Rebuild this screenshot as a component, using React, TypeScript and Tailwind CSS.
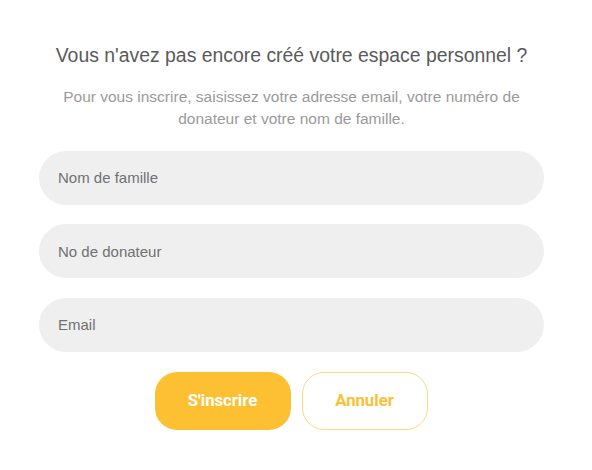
import React from "react";

export default function App() {
  const font = { fontFamily: '"Liberation Sans", Arial, sans-serif' };
  return (
    <div className="w-[592px] h-[470px] bg-white" style={font}>
      <div className="ml-[39px] w-[505px] pt-[43px] flex flex-col items-center">
        <h1 className="text-[19.4px] leading-[24px] text-[#5a5a5a] font-normal text-center whitespace-nowrap">
          Vous n'avez pas encore créé votre espace personnel ?
        </h1>
        <p className="mt-[18.5px] text-[15.5px] leading-[22px] text-[#9a9a9a] text-center">
          Pour vous inscrire, saisissez votre adresse email, votre numéro de donateur et votre nom de famille.
        </p>
        <div className="mt-[21px] w-full flex flex-col gap-[19.5px]">
          {["Nom de famille", "No de donateur", "Email"].map((p) => (
            <input
              key={p}
              placeholder={p}
              className="w-full h-[54px] rounded-full bg-[#efefef] pl-[19px] text-[15px] text-[#555] placeholder:text-[#717171] outline-none"
              style={font}
            />
          ))}
        </div>
        <div
          className="mt-[20px] flex gap-[11px] ml-[-1px]"
          style={{ fontFamily: 'Roboto, "Liberation Sans", sans-serif' }}
        >
          <button className="w-[136px] h-[58px] rounded-[22px] bg-[#fdc033] text-white font-bold text-[16.7px]">
            S'inscrire
          </button>
          <button className="w-[126px] h-[58px] rounded-[22px] bg-white border border-[#fdd886] text-[#fdc033] font-bold text-[16.7px]">
            Annuler
          </button>
        </div>
      </div>
    </div>
  );
}
